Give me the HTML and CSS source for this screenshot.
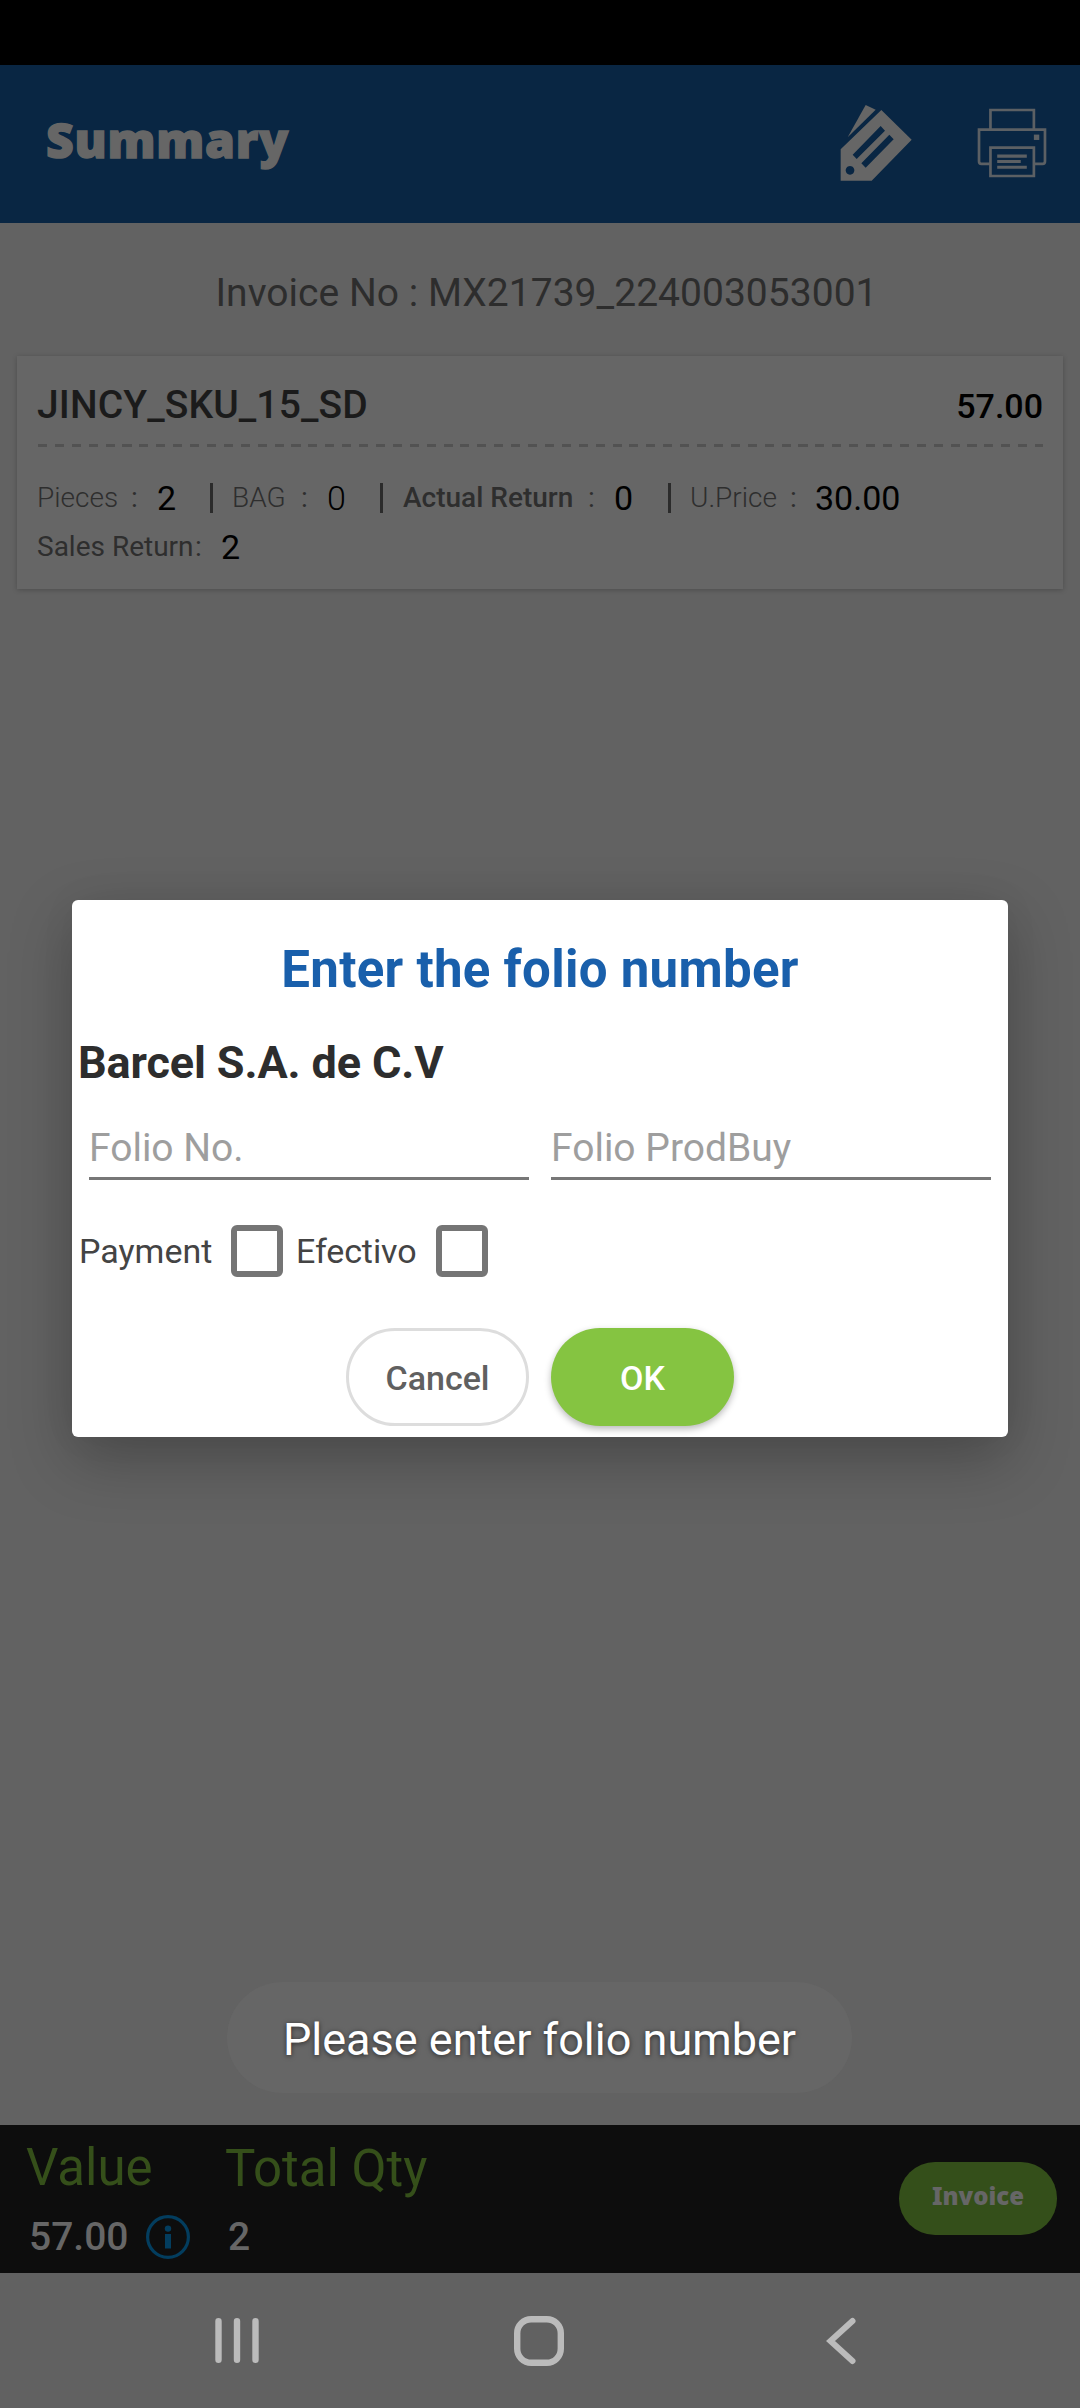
FILE: index.html
```html
<!DOCTYPE html>
<html lang="en">
<head>
<meta charset="utf-8">
<title>Summary</title>
<link rel="stylesheet" href="styles.css">
</head>
<body>
<div class="screen">
  <div class="status-bar"></div>
  <header class="app-bar">
    <h1 class="app-title">Summary</h1>
    <div class="app-actions">
      <svg class="icon-tag" viewBox="177 132 222 234">
        <path fill="#666" d="M257 135L287 149L203 232Z"/>
        <path fill="#666" fill-rule="evenodd" d="M304 150L395 239L275 362H182V268ZM302 198L218 284L230 297L315 212ZM328 224L244 310L257 323L341 238ZM210 318a13 13 0 1 0 .1 0Z"/>
      </svg>
      <svg class="icon-printer" viewBox="592 145 208 208">
        <g fill="none" stroke="#5c6064" stroke-width="8">
          <path d="M632 208V151H761V208"/>
          <path d="M632 311H605Q598 311 598 303V209H794V303Q794 311 787 311H761"/>
          <path d="M632 263H761V347H632Z"/>
          <path d="M652 288H740M652 304H722M652 321H740" stroke-width="9"/>
        </g>
        <path fill="#5c6064" d="M761 224h16v16h-16z"/>
      </svg>
    </div>
  </header>

  <main class="content">
    <div class="invoice-no">Invoice No : MX21739_224003053001</div>
    <section class="card">
      <div class="card-head">
        <span class="sku">JINCY_SKU_15_SD</span>
        <span class="amount">57.00</span>
      </div>
      <div class="dashes"></div>
      <div class="detail">
        <span class="light">Pieces</span><span>:</span><span class="num">2</span><i class="sep"></i>
        <span class="light">BAG</span><span>:</span><span class="num num-light">0</span><i class="sep"></i>
        <span class="strong">Actual Return</span><span>:</span><span class="num">0</span><i class="sep"></i>
        <span class="light">U.Price</span><span>:</span><span class="num">30.00</span>
      </div>
      <div class="detail detail-return">
        <span>Sales Return</span><span>:</span><span class="num">2</span>
      </div>
    </section>
  </main>

  <footer class="totals">
    <div class="total total-value">
      <span class="total-label">Value</span>
      <span class="total-number">57.00
        <svg class="icon-info" viewBox="0 0 44 44"><circle cx="22" cy="22" r="20.4" fill="none" stroke="#033d5e" stroke-width="3.2"/><circle cx="22" cy="13.6" r="3.2" fill="#033d5e"/><path fill="#033d5e" d="M19 19h6v14.500h-6z"/></svg>
      </span>
    </div>
    <div class="total">
      <span class="total-label total-qty">Total Qty</span>
      <span class="total-number">2</span>
    </div>
    <button class="invoice-button">Invoice</button>
  </footer>

  <nav class="nav-bar">
    <svg class="nav-icon" viewBox="0 0 50 50"><path fill="none" stroke="#bbb" stroke-width="6.400" stroke-linecap="round" d="M6.500 5.300V43.700M25 5.300V43.700M43.500 5.300V43.700"/></svg>
    <svg class="nav-icon" viewBox="0 0 50 50"><rect x="3.200" y="3.200" width="43.600" height="43.600" rx="14" fill="none" stroke="#bbb" stroke-width="6.400"/></svg>
    <svg class="nav-icon" viewBox="0 0 50 50"><path fill="none" stroke="#bbb" stroke-width="6" stroke-linecap="round" d="M36.500 5L14.500 25L36.500 45"/></svg>
  </nav>

  <div class="dialog">
    <h2 class="dialog-title">Enter the folio number</h2>
    <div class="company">Barcel S.A. de C.V</div>
    <div class="fields">
      <div class="field">Folio No.</div>
      <div class="field">Folio ProdBuy</div>
    </div>
    <div class="checks">
      <span class="check-label payment">Payment</span><span class="box"></span>
      <span class="check-label efectivo">Efectivo</span><span class="box"></span>
    </div>
    <div class="buttons">
      <button class="btn btn-cancel">Cancel</button>
      <button class="btn btn-ok">OK</button>
    </div>
  </div>

  <div class="toast">Please enter folio number</div>
</div>
</body>
</html>
```
FILE: styles.css
```css
* { box-sizing: border-box; }
body { margin: 0; font-family: Roboto, "Liberation Sans", sans-serif; }
h1, h2 { margin: 0; }
button { border: 0; padding: 0; font-family: inherit; }
svg { display: block; }

.screen {
  position: relative;
  display: flex;
  flex-direction: column;
  width: 1080px;
  height: 2408px;
  overflow: hidden;
  background: #626262;
}
.status-bar { height: 65px; background: #000; }

.app-bar {
  display: flex;
  justify-content: space-between;
  height: 158px;
  padding: 0 33px 0 46px;
  background: #092643;
}
.app-title {
  padding-top: 43px;
  font: 900 48px/64px "Noto Sans", sans-serif;
  letter-spacing: .8px;
  color: #666;
  -webkit-text-stroke: 1.500px #666;
}
.app-actions { display: flex; gap: 64px; padding-top: 39px; }
.icon-tag { width: 74px; height: 78px; }
.icon-printer { width: 70px; height: 70px; margin-top: 4px; }

.content { flex: 1; padding: 45px 17px 0; }
.invoice-no {
  height: 50px;
  padding-left: 13px;
  text-align: center;
  font-size: 39px;
  line-height: 50px;
  letter-spacing: .03px;
  color: #2d2d2d;
}
.card {
  height: 233px;
  margin-top: 38px;
  padding: 19px 20px 0;
  background: #666;
  box-shadow: 0 1px 5px rgba(0, 0, 0, .22);
}
.card-head { display: flex; justify-content: space-between; height: 60px; line-height: 60px; }
.sku { font-size: 39px; font-weight: 500; letter-spacing: .1px; color: #1b1b1b; }
.amount { padding-top: 1px; font-size: 34px; font-weight: 500; color: #000; }
.dashes {
  height: 3px;
  margin: 9px 0 0 1px;
  background: repeating-linear-gradient(90deg, #525252 0 9px, transparent 9px 16.900px);
}
.detail {
  display: grid;
  grid-template-columns: 94px 26px 53px 22px 69px 26px 53px 23px 185px 26px 54px 22px 100px 25px 1fr;
  align-items: center;
  height: 49px;
  margin-top: 26px;
  font-size: 28px;
  line-height: 40px;
  color: #2e2e2e;
}
.detail-return { grid-template-columns: 158px 26px 1fr; margin-top: 0; }
.light { font-weight: 300; }
.strong { font-weight: 500; }
.num { font-size: 34px; color: #000; }
.num-light { font-weight: 300; }
.sep { width: 3px; height: 30px; background: #2b2b2b; }

.totals { display: flex; height: 148px; padding: 0 23px 0 26px; background: #0d0d0d; }
.total { display: flex; flex-direction: column; padding-top: 13px; }
.total-value { width: 199px; }
.total-label { height: 60px; font-size: 51px; line-height: 60px; color: #354f1a; }
.total-qty { padding-top: 1px; }
.total-number {
  display: flex;
  align-items: center;
  gap: 17px;
  height: 50px;
  margin-top: 14px;
  padding-left: 3px;
  font-size: 39px;
  font-weight: 500;
  line-height: 50px;
  color: #666;
}
.icon-info { width: 44px; height: 44px; }
.invoice-button {
  width: 158px;
  height: 73px;
  margin: 37px 0 0 auto;
  padding-bottom: 5px;
  border-radius: 36px;
  background: #344f1a;
  font: 900 24px/32px "Noto Sans", sans-serif;
  color: #666;
}

.nav-bar { display: flex; align-items: center; gap: 252px; height: 135px; padding-left: 212px; background: #616161; }
.nav-icon { width: 50px; height: 50px; }

.dialog {
  position: absolute;
  left: 72px;
  top: 900px;
  width: 936px;
  height: 537px;
  padding-top: 40px;
  border-radius: 6px;
  background: #fff;
  box-shadow: 0 22px 62px rgba(0, 0, 0, .25), 0 0 40px rgba(0, 0, 0, .04);
}
.dialog-title { height: 60px; text-align: center; font-size: 51px; font-weight: 700; line-height: 60px; letter-spacing: .28px; color: #195fab; }
.company { height: 60px; margin-top: 33px; padding-left: 6px; font-size: 45px; font-weight: 700; line-height: 60px; letter-spacing: -.12px; color: #2d2d2d; }
.fields { display: flex; gap: 22px; height: 66px; margin: 21px 17px 0; }
.field { flex: 1; border-bottom: 3px solid #777; font-size: 39px; line-height: 68px; color: #9e9e9e; }
.checks { display: flex; align-items: center; height: 52px; margin-top: 45px; padding-left: 7px; font-size: 34px; color: #444; }
.check-label { line-height: 54px; }
.payment { width: 152px; }
.efectivo { width: 140px; margin-left: 13px; letter-spacing: -.1px; }
.box { width: 52px; height: 52px; border: 6px solid #757575; border-radius: 6px; }
.buttons { display: flex; justify-content: center; gap: 22px; margin-top: 51px; }
.btn { width: 183px; height: 98px; padding-top: 1px; border-radius: 49px; font-size: 34px; font-weight: 500; }
.btn-cancel { border: 3px solid #ddd; background: #fff; color: #606060; }
.btn-ok { background: #85c441; color: #fff; box-shadow: 0 3px 7px rgba(0, 0, 0, .28); }

.toast {
  position: absolute;
  left: 227px;
  top: 1982px;
  width: 625px;
  height: 111px;
  border-radius: 56px;
  background: #666;
  text-align: center;
  font-size: 45px;
  line-height: 116px;
  color: #fff;
  text-shadow: 0 1px 5px rgba(0, 0, 0, .6);
}
```
